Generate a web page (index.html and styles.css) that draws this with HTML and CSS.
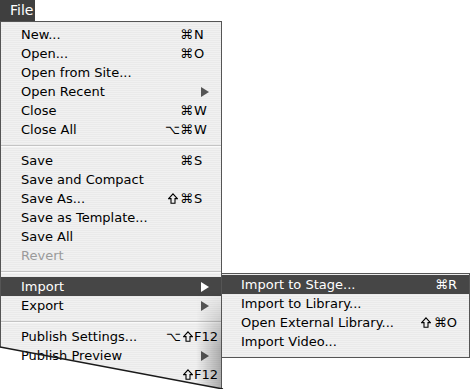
FILE: index.html
```html
<!DOCTYPE html>
<html>
<head>
<meta charset="utf-8">
<link rel="stylesheet" href="styles.css">
</head>
<body>
<div class="screen">
  <div class="menubar"><span class="title">File</span></div>
  <div class="menu main">
    <div class="item"><span class="label">New...</span><span class="keys"><span class="mod">⌘</span><span class="key">N</span></span></div>
    <div class="item"><span class="label">Open...</span><span class="keys"><span class="mod">⌘</span><span class="key">O</span></span></div>
    <div class="item"><span class="label">Open from Site...</span></div>
    <div class="item"><span class="label">Open Recent</span><span class="arrow"></span></div>
    <div class="item"><span class="label">Close</span><span class="keys"><span class="mod">⌘</span><span class="key">W</span></span></div>
    <div class="item"><span class="label">Close All</span><span class="keys"><span class="mod">⌥⌘</span><span class="key">W</span></span></div>
    <div class="sep"></div>
    <div class="item"><span class="label">Save</span><span class="keys"><span class="mod">⌘</span><span class="key">S</span></span></div>
    <div class="item"><span class="label">Save and Compact</span></div>
    <div class="item"><span class="label">Save As...</span><span class="keys"><span class="mod"><svg class="shift" width="10" height="11" viewBox="0 0 10 11"><path d="M5 0.8 L9.3 5.6 H7 V10.3 H3 V5.6 H0.7 Z"/></svg>⌘</span><span class="key">S</span></span></div>
    <div class="item"><span class="label">Save as Template...</span></div>
    <div class="item"><span class="label">Save All</span></div>
    <div class="item disabled"><span class="label">Revert</span></div>
    <div class="sep"></div>
    <div class="item active"><span class="label">Import</span><span class="arrow"></span></div>
    <div class="item"><span class="label">Export</span><span class="arrow"></span></div>
    <div class="sep"></div>
    <div class="item"><span class="label">Publish Settings...</span><span class="keys"><span class="mod">⌥<svg class="shift" width="10" height="11" viewBox="0 0 10 11"><path d="M5 0.8 L9.3 5.6 H7 V10.3 H3 V5.6 H0.7 Z"/></svg></span><span class="key">F12</span></span></div>
    <div class="item"><span class="label lift">Publish Preview</span><span class="arrow"></span></div>
    <div class="item"><span class="label">Publish</span><span class="keys"><span class="mod"><svg class="shift" width="10" height="11" viewBox="0 0 10 11"><path d="M5 0.8 L9.3 5.6 H7 V10.3 H3 V5.6 H0.7 Z"/></svg></span><span class="key">F12</span></span></div>
  </div>
  <div class="curl"></div>
  <svg class="cut" width="230" height="389" viewBox="0 0 230 389"><polygon points="0,347 223,389 0,389" fill="#fff"/></svg>
  <svg class="tear" width="230" height="389" viewBox="0 0 230 389"><line x1="0" y1="347" x2="223" y2="389" stroke="#1a1a1a" stroke-width="1.5"/></svg>
  <div class="menu sub">
    <div class="item active"><span class="label">Import to Stage...</span><span class="skeys">⌘R</span></div>
    <div class="item"><span class="label">Import to Library...</span></div>
    <div class="item"><span class="label">Open External Library...</span><span class="skeys"><svg class="shift" width="10" height="11" viewBox="0 0 10 11"><path d="M5 0.8 L9.3 5.6 H7 V10.3 H3 V5.6 H0.7 Z"/></svg>⌘O</span></div>
    <div class="item"><span class="label">Import Video...</span></div>
  </div>
</div>
</body>
</html>
```
FILE: styles.css
```css
html, body {
  margin: 0;
  padding: 0;
  background: #fff;
}
.screen {
  position: relative;
  width: 472px;
  height: 389px;
  overflow: hidden;
  font-family: "DejaVu Sans", sans-serif;
  font-size: 13px;
  color: #000;
}
.menubar {
  height: 21px;
  display: flex;
}
.title {
  background: #3f3f3f;
  color: #fff;
  width: 35px;
  height: 21px;
  line-height: 21px;
  padding-left: 10px;
  box-sizing: border-box;
  font-size: 14px;
}
.menu {
  background: repeating-linear-gradient(to bottom, #eaeaea 0 1px, #f1f1f1 1px 2px);
  box-sizing: border-box;
}
.main {
  width: 222px;
  border: 1px solid #555;
  border-bottom: none;
  padding-top: 3px;
  height: 368px;
}
.item {
  height: 19px;
  display: flex;
  align-items: center;
  padding-left: 20px;
}
.label {
  flex: 1;
  white-space: nowrap;
}
.lift {
  position: relative;
  z-index: 2;
}
.keys {
  display: flex;
  align-items: center;
  width: 60px;
  flex: none;
}
.mod {
  width: 32px;
  flex: none;
  display: flex;
  justify-content: flex-end;
  align-items: center;
  gap: 2px;
}
.key {
  white-space: nowrap;
  padding-left: 1px;
}
.shift {
  display: block;
  fill: none;
  stroke: currentColor;
  stroke-width: 1.1;
  stroke-linejoin: miter;
}
.arrow {
  width: 0;
  height: 0;
  border-top: 5px solid transparent;
  border-bottom: 5px solid transparent;
  border-left: 8px solid #555;
  margin-right: 12px;
}
.item.active {
  background: #464646;
  color: #fff;
}
.item.active .arrow {
  border-left-color: #fff;
}
.item.disabled {
  color: #9a9a9a;
}
.sep {
  height: 12px;
  display: flex;
  align-items: center;
}
.sep::before {
  content: "";
  display: block;
  width: 100%;
  height: 1px;
  background: #c4c4c4;
  box-shadow: 0 1px 0 #fafafa;
}
.curl {
  position: absolute;
  left: 196px;
  top: 290px;
  width: 25px;
  height: 99px;
  background: linear-gradient(to right, rgba(0,0,0,0) 0%, rgba(0,0,0,0.28) 100%);
  -webkit-mask-image: linear-gradient(to bottom, rgba(0,0,0,0), #000 60%);
  mask-image: linear-gradient(to bottom, rgba(0,0,0,0), #000 60%);
}
.cut {
  position: absolute;
  left: 0;
  top: 0;
  z-index: 1;
}
.tear {
  position: absolute;
  left: 0;
  top: 0;
  z-index: 3;
}
.sub {
  position: absolute;
  left: 221px;
  top: 273px;
  width: 249px;
  border: 1px solid #555;
  padding: 1px 0 6px;
}
.sub .item {
  padding-left: 19px;
  padding-right: 12px;
}
.skeys {
  flex: none;
  display: flex;
  align-items: center;
  gap: 3px;
}
```
